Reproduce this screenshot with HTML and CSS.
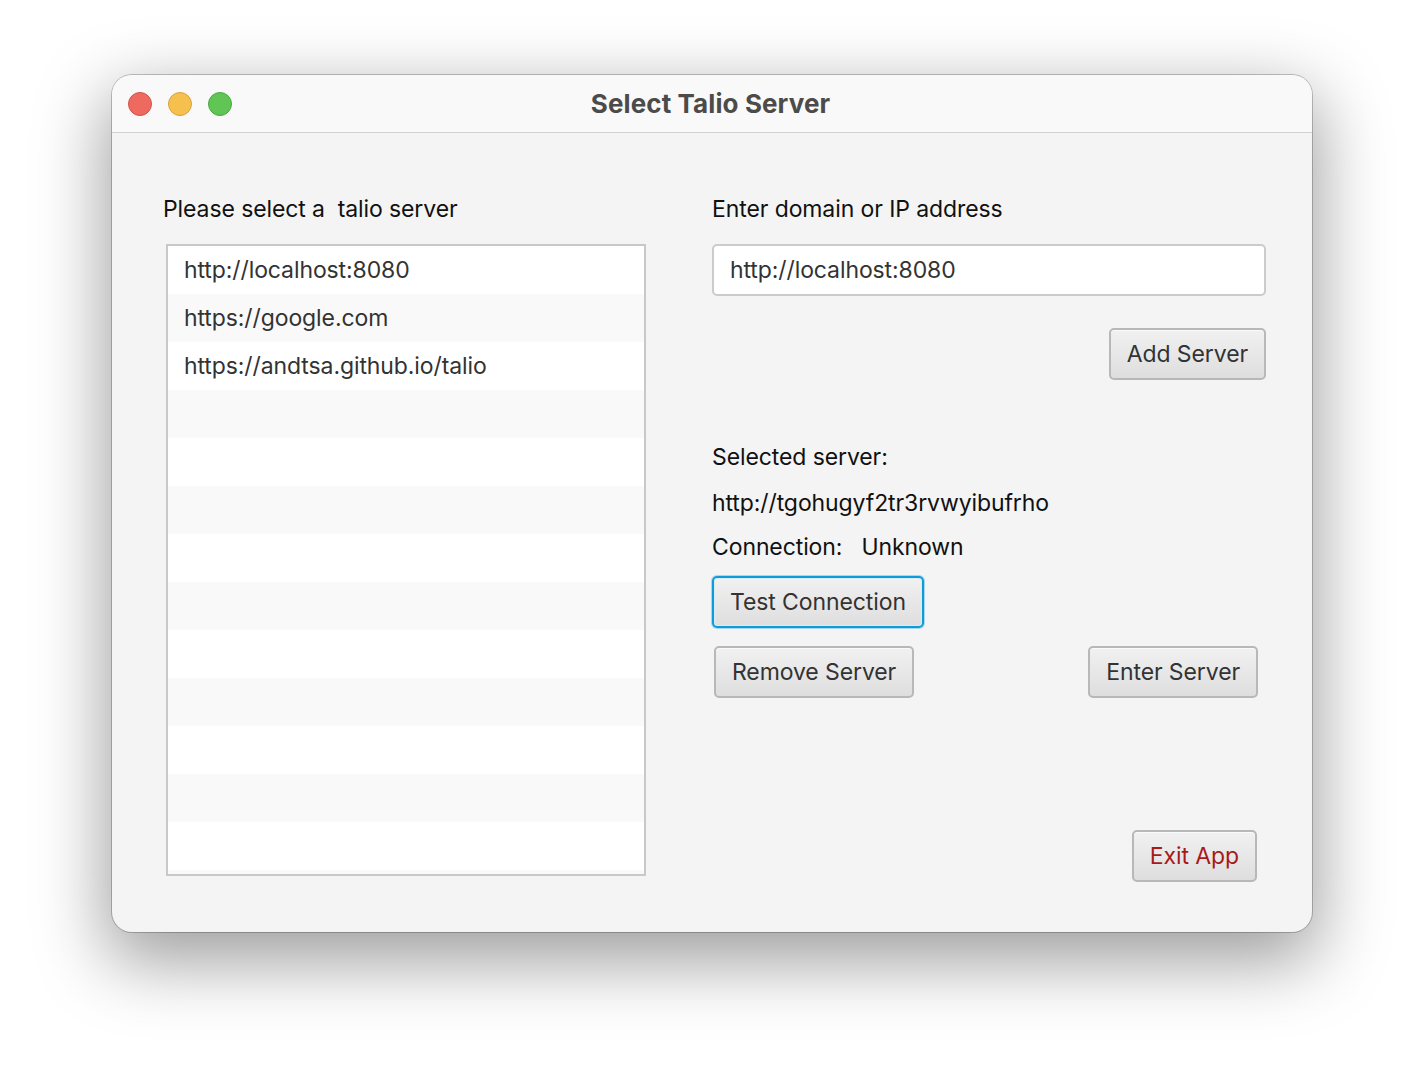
FILE: index.html
```html
<!DOCTYPE html>
<html>
<head>
<meta charset="utf-8">
<link rel="stylesheet" href="styles.css">
</head>
<body>
<div class="window">
  <div class="titlebar">
    <div class="lights">
      <span class="light red"></span>
      <span class="light yellow"></span>
      <span class="light green"></span>
    </div>
    <div class="title">Select Talio Server</div>
  </div>
  <div class="content">
    <div class="left">
      <div class="label">Please select a&nbsp; talio server</div>
      <div class="list">
        <div class="row">http://localhost:8080</div>
        <div class="row">https://google.com</div>
        <div class="row">https://andtsa.github.io/talio</div>
        <div class="row"></div>
        <div class="row"></div>
        <div class="row"></div>
        <div class="row"></div>
        <div class="row"></div>
        <div class="row"></div>
        <div class="row"></div>
        <div class="row"></div>
        <div class="row"></div>
        <div class="row"></div>
        <div class="row"></div>
      </div>
    </div>
    <div class="right">
      <div class="label">Enter domain or IP address</div>
      <div class="field">http://localhost:8080</div>
      <div class="add-row"><button class="btn">Add Server</button></div>
      <div class="label sel">Selected server:</div>
      <div class="label url">http://tgohugyf2tr3rvwyibufrho</div>
      <div class="label conn">Connection:&nbsp;&nbsp; Unknown</div>
      <div class="test-row"><button class="btn focused">Test Connection</button></div>
      <div class="pair-row">
        <button class="btn">Remove Server</button>
        <button class="btn">Enter Server</button>
      </div>
      <div class="exit-row"><button class="btn exit">Exit App</button></div>
    </div>
  </div>
</div>
</body>
</html>
```
FILE: styles.css
```css
html, body {
  margin: 0;
  padding: 0;
  background: #ffffff;
}
body {
  box-sizing: border-box;
  min-height: 1080px;
  padding: 75px 0 0 112px;
  font-family: Inter, "Noto Sans", "Liberation Sans", sans-serif;
}
.window {
  width: 1200px;
  height: 857px;
  border-radius: 20px;
  background: #f4f4f4;
  overflow: hidden;
  box-shadow: 0 24px 70px 6px rgba(0,0,0,0.38), 0 0 0 1px rgba(0,0,0,0.22);
  display: flex;
  flex-direction: column;
}
.titlebar {
  height: 57px;
  background: #f9f9f9;
  border-bottom: 1px solid #d2d2d2;
  display: flex;
  align-items: center;
  position: relative;
  flex-shrink: 0;
}
.lights {
  display: flex;
  gap: 16px;
  padding-left: 16px;
  padding-top: 1px;
}
.light {
  width: 22px;
  height: 22px;
  border-radius: 50%;
  display: block;
}
.red { background: #ee6a5f; border: 1px solid #d35247; }
.yellow { background: #f6c04f; border: 1px solid #d9a23a; }
.green { background: #60c554; border: 1px solid #4aa83f; }
.title {
  position: absolute;
  left: 0;
  right: 0;
  top: 0;
  bottom: 0;
  display: flex;
  align-items: center;
  justify-content: center;
  font-weight: 700;
  font-size: 26px;
  letter-spacing: 0.1px;
  color: #4b4b4b;
  padding-right: 3px;
}
.content {
  display: flex;
  padding-top: 61px;
}
.left {
  margin-left: 51px;
  width: 498px;
}
.label {
  font-size: 23px;
  line-height: 30px;
  height: 30px;
  color: #111;
  letter-spacing: -0.1px;
  white-space: nowrap;
}
.list {
  margin-top: 20px;
  margin-left: 3px;
  width: 476px;
  height: 628px;
  border: 2px solid #c8c8c8;
  background: #f9f9f9;
  overflow: hidden;
}
.row {
  height: 48px;
  line-height: 48px;
  padding-left: 16px;
  font-size: 23px;
  color: #333;
  letter-spacing: -0.1px;
  background: #ffffff;
  white-space: nowrap;
}
.row:nth-child(even) {
  background: #f9f9f9;
}
.right {
  margin-left: 51px;
  width: 554px;
  display: flex;
  flex-direction: column;
}
.field {
  margin-top: 20px;
  height: 48px;
  line-height: 48px;
  border: 2px solid #cbcbcb;
  border-radius: 5px;
  background: #fff;
  padding-left: 16px;
  font-size: 23px;
  color: #333;
  letter-spacing: -0.1px;
}
.add-row {
  margin-top: 32px;
  display: flex;
  justify-content: flex-end;
}
.btn {
  height: 52px;
  padding: 0 16px;
  font-family: inherit;
  font-size: 23px;
  letter-spacing: -0.1px;
  color: #333;
  border: 2px solid #b8b8b8;
  border-radius: 5px;
  background: linear-gradient(#f1f1f1, #dedede);
  box-shadow: inset 0 1px 0 #fafafa;
  cursor: default;
}
.sel { margin-top: 62px; }
.url { margin-top: 16px; }
.conn { margin-top: 14px; }
.test-row {
  margin-top: 14px;
  display: flex;
}
.btn.focused {
  border-color: #0b9cd9;
  box-shadow: 0 0 0 1px #a8d6ee, inset 0 0 0 1px #d8ecf6;
}
.pair-row {
  margin-top: 18px;
  display: flex;
  justify-content: space-between;
  padding-left: 2px;
  padding-right: 8px;
}
.exit-row {
  margin-top: 132px;
  display: flex;
  justify-content: flex-end;
  padding-right: 9px;
}
.btn.exit {
  color: #a8191b;
}
```
